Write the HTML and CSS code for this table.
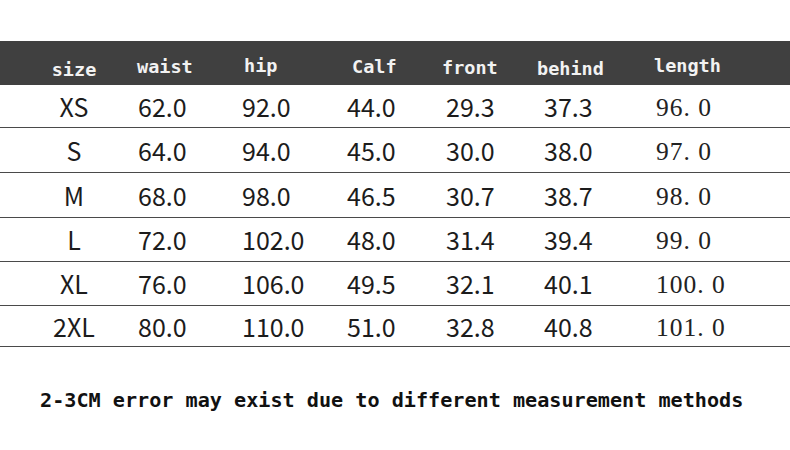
FILE: index.html
```html
<!DOCTYPE html>
<html>
<head>
<meta charset="utf-8">
<link rel="stylesheet" href="styles.css">
</head>
<body>
<div class="page">
  <div class="table">
    <div class="row head">
      <div class="cell c1 h-size">size</div>
      <div class="cell h-waist">waist</div>
      <div class="cell h-hip">hip</div>
      <div class="cell h-calf">Calf</div>
      <div class="cell h-front">front</div>
      <div class="cell h-behind">behind</div>
      <div class="cell h-length">length</div>
    </div>
    <div class="row body r1">
      <div class="cell c1">XS</div><div class="cell">62.0</div><div class="cell">92.0</div><div class="cell">44.0</div><div class="cell">29.3</div><div class="cell">37.3</div><div class="cell len">96. 0</div>
    </div>
    <div class="row body r2">
      <div class="cell c1">S</div><div class="cell">64.0</div><div class="cell">94.0</div><div class="cell">45.0</div><div class="cell">30.0</div><div class="cell">38.0</div><div class="cell len">97. 0</div>
    </div>
    <div class="row body r3">
      <div class="cell c1">M</div><div class="cell">68.0</div><div class="cell">98.0</div><div class="cell">46.5</div><div class="cell">30.7</div><div class="cell">38.7</div><div class="cell len">98. 0</div>
    </div>
    <div class="row body r4">
      <div class="cell c1">L</div><div class="cell">72.0</div><div class="cell">102.0</div><div class="cell">48.0</div><div class="cell">31.4</div><div class="cell">39.4</div><div class="cell len">99. 0</div>
    </div>
    <div class="row body r5">
      <div class="cell c1">XL</div><div class="cell">76.0</div><div class="cell">106.0</div><div class="cell">49.5</div><div class="cell">32.1</div><div class="cell">40.1</div><div class="cell len">100. 0</div>
    </div>
    <div class="row body r6">
      <div class="cell c1">2XL</div><div class="cell">80.0</div><div class="cell">110.0</div><div class="cell">51.0</div><div class="cell">32.8</div><div class="cell">40.8</div><div class="cell len">101. 0</div>
    </div>
  </div>
  <p class="note">2-3CM error may exist due to different measurement methods</p>
</div>
</body>
</html>
```
FILE: styles.css
```css
html, body {
  margin: 0;
  padding: 0;
  background: #ffffff;
}

.page {
  width: 790px;
  height: 450px;
  padding-top: 41px;
  box-sizing: border-box;
}

.row {
  display: grid;
  grid-template-columns: 138px 104px 105px 99px 98px 112px 134px;
}

.head {
  height: 44px;
  background: #404040;
  color: #f2f2f2;
  font-family: "DejaVu Sans Mono", monospace;
  font-weight: bold;
  font-size: 18.5px;
  line-height: 22px;
  align-items: start;
}

.body {
  height: 43px;
  border-bottom: 1px solid #4a4a4a;
  align-items: center;
  color: #1c1c1c;
  font-family: "Noto Sans CJK SC", sans-serif;
  font-size: 25px;
  line-height: 30px;
}

.body.r1 { height: 42px; }
.body.r2 { height: 44px; }
.body.r3 { height: 44px; }
.body.r4 { height: 43px; }
.body.r5 { height: 43px; }
.body.r6 { height: 40px; }

.cell {
  white-space: nowrap;
}

.c1 {
  text-align: center;
  padding-left: 10px;
}

.body .cell {
  margin-top: -1px;
}

.body .len {
  margin-top: 3px;
  font-family: "Liberation Serif", serif;
  font-size: 25.5px;
  letter-spacing: 1px;
  color: #222222;
}

.h-size { padding-top: 18px; }
.h-waist { padding-top: 15px; margin-left: -1px; }
.h-hip { padding-top: 14px; margin-left: 2px; }
.h-calf { padding-top: 15px; margin-left: 5px; }
.h-front { padding-top: 16px; margin-left: -4px; }
.h-behind { padding-top: 17px; margin-left: -7px; }
.h-length { padding-top: 14px; margin-left: -2px; }

.note {
  margin: 41px 0 0 40px;
  font-family: "DejaVu Sans Mono", monospace;
  font-weight: bold;
  font-size: 20.15px;
  line-height: 24px;
  color: #111111;
  white-space: nowrap;
}
```
